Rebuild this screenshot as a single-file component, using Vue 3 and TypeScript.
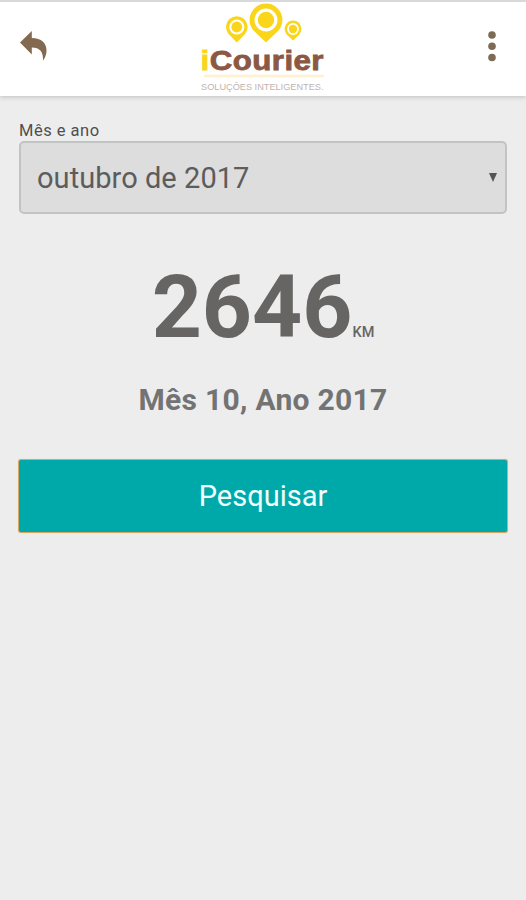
<script setup lang="ts">
import { ref } from 'vue'

interface Pin { x: number; y: number; r: number; tail: number }

const pins: Pin[] = [
  { x: 46.8, y: 27, r: 10.8, tail: 15.5 },
  { x: 76, y: 20, r: 16.4, tail: 22.4 },
  { x: 103, y: 29, r: 8.4, tail: 11.5 },
]

const pinPath = (p: Pin): string => {
  const dx = p.r * 0.78
  const dy = p.r * 0.62
  return `M${p.x} ${p.y + p.tail}L${p.x - dx} ${p.y + dy}A${p.r} ${p.r} 0 1 1 ${p.x + dx} ${p.y + dy}Z`
}

const period = ref('outubro de 2017')
const distance = ref(2646)
const month = ref(10)
const year = ref(2017)
</script>

<template>
  <div class="screen">
    <header class="bar">
      <button class="icon-button" aria-label="Voltar">
        <svg width="28" height="32" viewBox="0 0 28 32">
          <path d="M0 12.5 11.8 1V8C21.5 8 26.5 13 26.5 20.5C26.5 24.5 25 28 23 30.5C23.5 22 20 17.4 11.8 17.4V24.5Z" fill="#82694f" />
        </svg>
      </button>
      <svg class="logo" width="146" height="95" viewBox="0 0 146 95">
        <g v-for="p in pins" :key="p.x">
          <path :d="pinPath(p)" fill="#fad519" />
          <circle :cx="p.x" :cy="p.y" :r="p.r * 0.7" fill="#fff" />
          <circle :cx="p.x" :cy="p.y" :r="p.r * 0.5" fill="#fad519" />
        </g>
        <text class="brand" x="10.5" y="70" textLength="123.5" lengthAdjust="spacingAndGlyphs"><tspan fill="#fad519" stroke="#fad519">i</tspan>Courier</text>
        <path d="M14 76H134" stroke="#fff0cf" stroke-width="2.4" />
        <text class="tagline" x="11" y="89.5" textLength="122.5" lengthAdjust="spacingAndGlyphs">SOLUÇÕES INTELIGENTES.</text>
      </svg>
      <button class="icon-button" aria-label="Menu">
        <svg width="8" height="32" viewBox="0 0 8 32" fill="#7d6b55">
          <circle cx="4" cy="5" r="3.8" /><circle cx="4" cy="16.3" r="3.8" /><circle cx="4" cy="27.5" r="3.8" />
        </svg>
      </button>
    </header>
    <main class="content">
      <label class="label">Mês e ano</label>
      <div class="select">
        <span>{{ period }}</span>
        <svg width="8" height="9" viewBox="0 0 8 9"><path d="M0 0H8L4 9Z" fill="#555" /></svg>
      </div>
      <div class="total"><strong>{{ distance }}</strong><span class="unit">KM</span></div>
      <h2 class="period">Mês {{ month }}, Ano {{ year }}</h2>
      <button class="search">Pesquisar</button>
    </main>
  </div>
</template>

<style>
body { background: #ededed; }
</style>

<style scoped>
.screen {
  min-height: 900px;
  background: #ededed;
  font-family: Roboto, sans-serif;
  color: #666564;
}
.bar {
  box-sizing: border-box;
  height: 96px;
  padding: 0 30px 0 20px;
  border-top: 2px solid #d9d9d9;
  background: #fff;
  box-shadow: 0 1px 5px rgba(0, 0, 0, 0.2);
  display: grid;
  grid-template-columns: 170px 146px 1fr;
  align-items: start;
}
.icon-button {
  border: 0;
  padding: 0;
  margin-top: 28px;
  background: none;
  justify-self: start;
  display: flex;
}
.icon-button:last-child { justify-self: end; }
.logo { margin-top: -2px; }
.brand {
  font: bold 27.5px "Liberation Sans", Arial, sans-serif;
  letter-spacing: 0.4px;
  fill: #8b5843;
  stroke: #8b5843;
  stroke-width: 0.8px;
}
.tagline {
  font: 9.5px "Liberation Sans", Arial, sans-serif;
  fill: #c0b4b0;
}
.content {
  padding: 25px 19px 0;
  display: flex;
  flex-direction: column;
}
.label {
  height: 20px;
  font-size: 16.5px;
  line-height: 20px;
  letter-spacing: 0.5px;
  color: #4f4f4f;
}
.select {
  box-sizing: border-box;
  height: 73px;
  padding: 0 8px 0 16px;
  border: 2px solid #c1c4c4;
  border-radius: 5px;
  background: #ddd;
  display: flex;
  align-items: center;
  justify-content: space-between;
  font-size: 29px;
  letter-spacing: 0.05px;
  color: #5c5c5c;
}
.total {
  margin-top: 41px;
  height: 104px;
  display: flex;
  justify-content: center;
  align-items: baseline;
  line-height: 104px;
}
.total strong { font-size: 87.5px; font-weight: 700; }
.unit { font-size: 14.5px; font-weight: 500; }
.period {
  margin: 23px 0 0;
  font-size: 30px;
  line-height: 36px;
  font-weight: 700;
  letter-spacing: 0.3px;
  text-align: center;
  color: #737373;
}
.search {
  height: 74px;
  margin: 41px -1px 0;
  padding: 0;
  border: 1px solid #d9a75f;
  border-radius: 3px;
  box-shadow: 0 0 1px rgba(226, 170, 100, 0.6);
  background: #00a9a9;
  color: #f2ffff;
  font: 29px Roboto, sans-serif;
}
</style>
